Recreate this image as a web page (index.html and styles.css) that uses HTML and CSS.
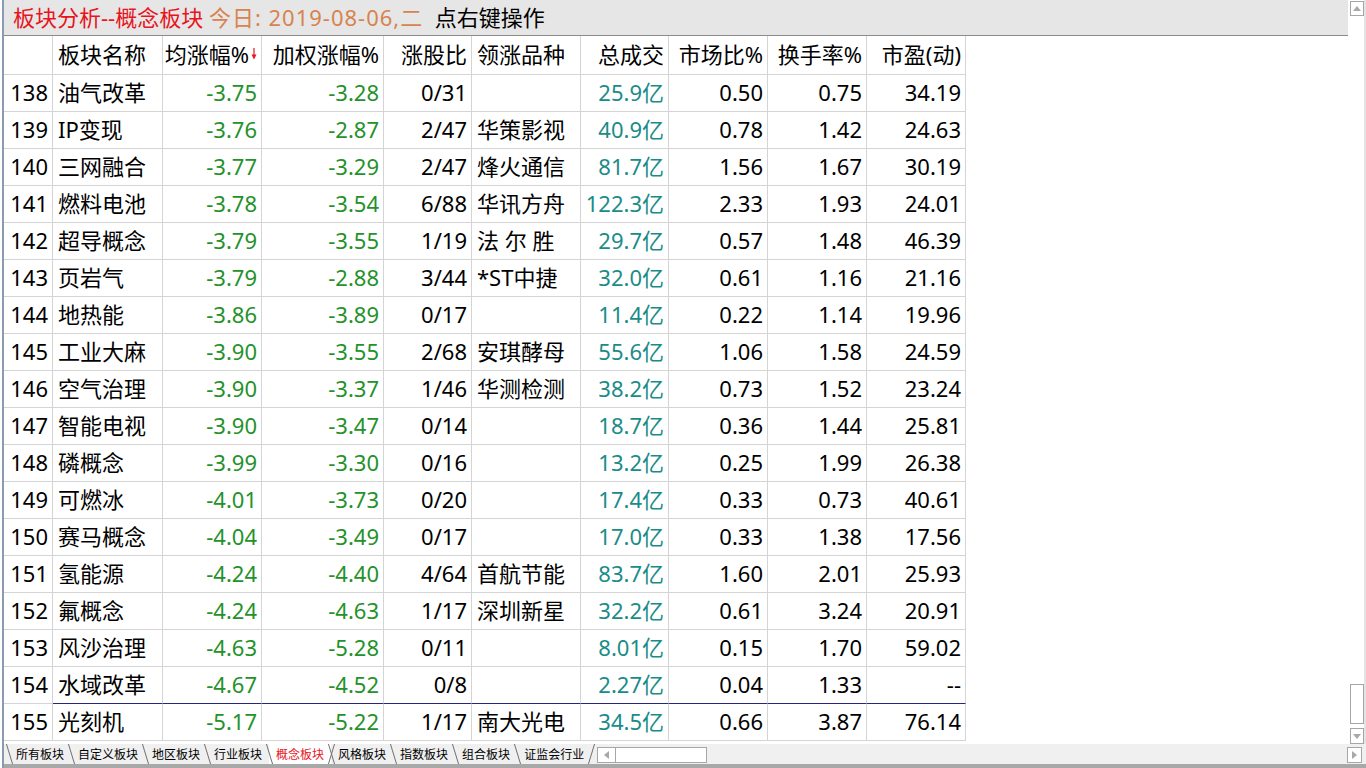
FILE: index.html
```html
<!DOCTYPE html>
<html lang="zh-CN">
  <head>
    <meta charset="utf-8">
    <title>板块分析--概念板块</title>
    <link rel="stylesheet" href="styles.css">
  </head>
  <body>
    <div class="window">
      <div class="upper">
        <div class="content">
          <div class="titlebar"><span class="t-red">板块分析--概念板块</span> <span class="t-orange">今日: 2019-08-06,二</span>  <span>点右键操作</span></div>

          <div class="row head">
            <div class="c"></div>
            <div class="c l">板块名称</div>
            <div class="c">均涨幅%<svg class="sortarrow" width="6" height="12" viewBox="0 0 6 12"><line x1="3" y1="0" x2="3" y2="8" stroke="#e8141e" stroke-width="1.2"/><polygon points="0.5,6.5 5.5,6.5 3,11.5" fill="#e8141e"/></svg></div>
            <div class="c">加权涨幅%</div>
            <div class="c">涨股比</div>
            <div class="c l">领涨品种</div>
            <div class="c">总成交</div>
            <div class="c">市场比%</div>
            <div class="c">换手率%</div>
            <div class="c">市盈(动)</div>
          </div>

          <div class="row"><div class="c">138</div><div class="c l">油气改革</div><div class="c g">-3.75</div><div class="c g">-3.28</div><div class="c">0/31</div><div class="c l"></div><div class="c t">25.9亿</div><div class="c">0.50</div><div class="c">0.75</div><div class="c">34.19</div></div>
          <div class="row"><div class="c">139</div><div class="c l">IP变现</div><div class="c g">-3.76</div><div class="c g">-2.87</div><div class="c">2/47</div><div class="c l">华策影视</div><div class="c t">40.9亿</div><div class="c">0.78</div><div class="c">1.42</div><div class="c">24.63</div></div>
          <div class="row"><div class="c">140</div><div class="c l">三网融合</div><div class="c g">-3.77</div><div class="c g">-3.29</div><div class="c">2/47</div><div class="c l">烽火通信</div><div class="c t">81.7亿</div><div class="c">1.56</div><div class="c">1.67</div><div class="c">30.19</div></div>
          <div class="row"><div class="c">141</div><div class="c l">燃料电池</div><div class="c g">-3.78</div><div class="c g">-3.54</div><div class="c">6/88</div><div class="c l">华讯方舟</div><div class="c t">122.3亿</div><div class="c">2.33</div><div class="c">1.93</div><div class="c">24.01</div></div>
          <div class="row"><div class="c">142</div><div class="c l">超导概念</div><div class="c g">-3.79</div><div class="c g">-3.55</div><div class="c">1/19</div><div class="c l">法 尔 胜</div><div class="c t">29.7亿</div><div class="c">0.57</div><div class="c">1.48</div><div class="c">46.39</div></div>
          <div class="row"><div class="c">143</div><div class="c l">页岩气</div><div class="c g">-3.79</div><div class="c g">-2.88</div><div class="c">3/44</div><div class="c l">*ST中捷</div><div class="c t">32.0亿</div><div class="c">0.61</div><div class="c">1.16</div><div class="c">21.16</div></div>
          <div class="row"><div class="c">144</div><div class="c l">地热能</div><div class="c g">-3.86</div><div class="c g">-3.89</div><div class="c">0/17</div><div class="c l"></div><div class="c t">11.4亿</div><div class="c">0.22</div><div class="c">1.14</div><div class="c">19.96</div></div>
          <div class="row"><div class="c">145</div><div class="c l">工业大麻</div><div class="c g">-3.90</div><div class="c g">-3.55</div><div class="c">2/68</div><div class="c l">安琪酵母</div><div class="c t">55.6亿</div><div class="c">1.06</div><div class="c">1.58</div><div class="c">24.59</div></div>
          <div class="row"><div class="c">146</div><div class="c l">空气治理</div><div class="c g">-3.90</div><div class="c g">-3.37</div><div class="c">1/46</div><div class="c l">华测检测</div><div class="c t">38.2亿</div><div class="c">0.73</div><div class="c">1.52</div><div class="c">23.24</div></div>
          <div class="row"><div class="c">147</div><div class="c l">智能电视</div><div class="c g">-3.90</div><div class="c g">-3.47</div><div class="c">0/14</div><div class="c l"></div><div class="c t">18.7亿</div><div class="c">0.36</div><div class="c">1.44</div><div class="c">25.81</div></div>
          <div class="row"><div class="c">148</div><div class="c l">磷概念</div><div class="c g">-3.99</div><div class="c g">-3.30</div><div class="c">0/16</div><div class="c l"></div><div class="c t">13.2亿</div><div class="c">0.25</div><div class="c">1.99</div><div class="c">26.38</div></div>
          <div class="row"><div class="c">149</div><div class="c l">可燃冰</div><div class="c g">-4.01</div><div class="c g">-3.73</div><div class="c">0/20</div><div class="c l"></div><div class="c t">17.4亿</div><div class="c">0.33</div><div class="c">0.73</div><div class="c">40.61</div></div>
          <div class="row"><div class="c">150</div><div class="c l">赛马概念</div><div class="c g">-4.04</div><div class="c g">-3.49</div><div class="c">0/17</div><div class="c l"></div><div class="c t">17.0亿</div><div class="c">0.33</div><div class="c">1.38</div><div class="c">17.56</div></div>
          <div class="row"><div class="c">151</div><div class="c l">氢能源</div><div class="c g">-4.24</div><div class="c g">-4.40</div><div class="c">4/64</div><div class="c l">首航节能</div><div class="c t">83.7亿</div><div class="c">1.60</div><div class="c">2.01</div><div class="c">25.93</div></div>
          <div class="row"><div class="c">152</div><div class="c l">氟概念</div><div class="c g">-4.24</div><div class="c g">-4.63</div><div class="c">1/17</div><div class="c l">深圳新星</div><div class="c t">32.2亿</div><div class="c">0.61</div><div class="c">3.24</div><div class="c">20.91</div></div>
          <div class="row"><div class="c">153</div><div class="c l">风沙治理</div><div class="c g">-4.63</div><div class="c g">-5.28</div><div class="c">0/11</div><div class="c l"></div><div class="c t">8.01亿</div><div class="c">0.15</div><div class="c">1.70</div><div class="c">59.02</div></div>
          <div class="row cur-above"><div class="c">154</div><div class="c l">水域改革</div><div class="c g">-4.67</div><div class="c g">-4.52</div><div class="c">0/8</div><div class="c l"></div><div class="c t">2.27亿</div><div class="c">0.04</div><div class="c">1.33</div><div class="c">--</div></div>
          <div class="row"><div class="c">155</div><div class="c l">光刻机</div><div class="c g">-5.17</div><div class="c g">-5.22</div><div class="c">1/17</div><div class="c l">南大光电</div><div class="c t">34.5亿</div><div class="c">0.66</div><div class="c">3.87</div><div class="c">76.14</div></div>
        </div>

        <div class="vscroll">
          <div class="sbtn up"><svg width="8" height="5" viewBox="0 0 8 5"><polygon points="0,5 8,5 4,0" fill="#a8a8a8"/></svg></div>
          <div class="spacer"></div>
          <div class="sthumb"></div>
          <div class="sbtn down"><svg width="8" height="5" viewBox="0 0 8 5"><polygon points="0,0 8,0 4,5" fill="#a8a8a8"/></svg></div>
        </div>
      </div>

      <div class="tabbar">
        <div class="tabs">
          <span class="tab">所有板块</span>
          <span class="tab">自定义板块</span>
          <span class="tab">地区板块</span>
          <span class="tab">行业板块</span>
          <span class="tab active">概念板块</span>
          <span class="tab">风格板块</span>
          <span class="tab">指数板块</span>
          <span class="tab">组合板块</span>
          <span class="tab last">证监会行业</span>
        </div>
        <div class="hscroll">
          <div class="hbtn"><svg width="5" height="8" viewBox="0 0 5 8"><polygon points="5,0 5,8 0,4" fill="#a8a8a8"/></svg></div>
          <div class="htrack"></div>
        </div>
        <div class="spacer"></div>
        <div class="hbtn right"><svg width="5" height="8" viewBox="0 0 5 8"><polygon points="0,0 0,8 5,4" fill="#a8a8a8"/></svg></div>
      </div>
      <div class="bottomstrip"></div>
    </div>
  </body>
</html>
```

FILE: styles.css
```css
body{
  margin:0;
  padding-left:2px;
  background-color:white;
  font-family:"Noto Sans","Noto Sans CJK SC",sans-serif;
  overflow:hidden;
}
.window{
  height:768px;
  border-left:2px solid #8a9ab0;
  display:flex;
  flex-direction:column;
}
.upper{
  height:744px;
  display:flex;
}
.content{
  flex:1;
}
.titlebar{
  height:35px;
  line-height:35px;
  background-color:#e6e6e6;
  border-bottom:1px solid #8c8c8c;
  padding-left:9px;
  font-size:22px;
  white-space:pre;
  color:#000;
}
.t-red{
  color:#e8141e;
}
.t-orange{
  color:#d7834f;
  letter-spacing:1px;
}

/* table */
.row{
  display:grid;
  grid-template-columns:49px 110px 99px 122px 88px 109px 88px 99px 99px 99px;
  width:962px;
}
.c{
  box-sizing:border-box;
  height:37px;
  line-height:35px;
  border-right:1px solid #d4d4d4;
  border-bottom:1px solid #d4d4d4;
  font-size:22px;
  text-align:right;
  padding-right:4px;
  white-space:pre;
  color:#000;
}
.c.l{
  text-align:left;
  padding-left:5px;
  padding-right:0;
}
.head .c{
  height:39px;
  line-height:37px;
}
.c.g{
  color:#24922a;
}
.c.t{
  color:#1a8c88;
}
.cur-above .c{
  border-bottom-color:#26267e;
}
.cur-above .c:first-child{
  border-bottom-color:#d4d4d4;
}
.sortarrow{
  margin-left:2px;
  vertical-align:3px;
}

/* vertical scrollbar */
.vscroll{
  width:16px;
  border-right:2px solid #e4e4e4;
  display:flex;
  flex-direction:column;
}
.spacer{
  flex:1;
}
.sbtn, .sthumb{
  box-sizing:border-box;
  width:14px;
  margin-left:2px;
  border:1px solid #a6a6a6;
  background-color:white;
}
.sbtn{
  height:15px;
  display:flex;
  align-items:center;
  justify-content:center;
}
.sbtn.up{
  margin-top:1px;
}
.sthumb{
  height:40px;
  margin-bottom:4px;
}
.sbtn.down{
  height:16px;
}

/* sheet tabs */
.tabbar{
  height:20px;
  display:flex;
  background-color:#f0f0f0;
}
.tabs{
  display:flex;
  padding-left:5px;
}
.tab{
  position:relative;
  font-size:12px;
  line-height:21px;
  padding:0 7px;
  color:#000;
}
.tab::before{
  content:"";
  position:absolute;
  left:0;
  top:0;
  bottom:0;
  border-left:1px solid #707070;
  transform:skewX(17deg);
}
.tab.active{
  color:#e8141e;
  background-color:white;
}
.tab.active::after, .tab.last::after{
  content:"";
  position:absolute;
  right:-1px;
  top:0;
  bottom:0;
  border-left:1px solid #707070;
  transform:skewX(-17deg);
}
.hscroll{
  display:flex;
  margin-left:6px;
  margin-top:3px;
  height:16px;
  box-sizing:border-box;
  border:1px solid #a6a6a6;
  background-color:white;
}
.hbtn{
  width:17px;
  display:flex;
  align-items:center;
  justify-content:center;
}
.htrack{
  width:90px;
  border-left:1px solid #a6a6a6;
}
.hbtn.right{
  box-sizing:border-box;
  width:15px;
  height:16px;
  margin-top:3px;
  margin-right:4px;
  border:1px solid #a6a6a6;
  background-color:white;
}
.bottomstrip{
  height:4px;
  background-color:#a8a8a8;
}
```
